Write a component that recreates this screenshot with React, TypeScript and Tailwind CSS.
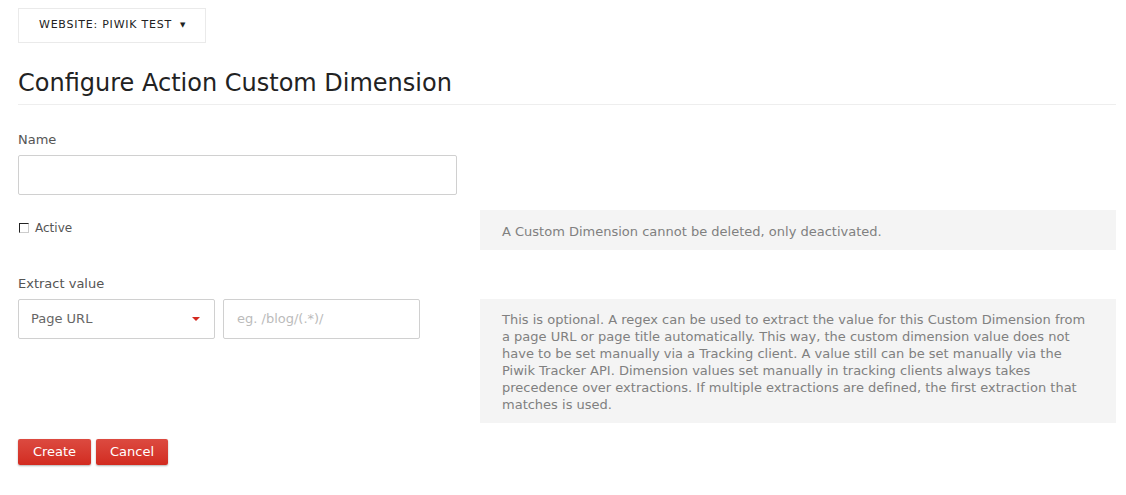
import React from 'react';

const App: React.FC = () => {
  return (
    <div className="min-h-screen bg-white pl-[18px] pr-[10px] pt-[8px] text-[#333]" style={{ fontFamily: '"DejaVu Sans", Verdana, sans-serif' }}>
      {/* Website selector */}
      <div className="flex items-center h-[35px] w-[188px] border border-[#eaeaea] pl-[20px] text-[11px] tracking-[0.07em] text-[#222]">
        WEBSITE: PIWIK TEST
        <span className="ml-[8px] text-[7px]">▼</span>
      </div>

      <h2 className="mt-[24px] pb-[5px] border-b border-[#eeeeee] text-[24px] leading-[32px] text-[#222]">
        Configure Action Custom Dimension
      </h2>

      <div className="mt-[25px] text-[13px] leading-[20px] text-[#555]">Name</div>
      <div className="mt-[5px] w-[439px] h-[40px] border border-[#d0d0d0] rounded-[2px]" />

      {/* Active row */}
      <div className="mt-[15px] flex items-start">
        <label className="w-[462px] flex items-center gap-[6px] pt-[8px] text-[12px] leading-[20px] text-[#555]">
          <span className="ml-[1px] w-[10px] h-[10px] border border-t-[#222] border-l-[#222] border-r-[#ccc] border-b-[#ccc]" />
          Active
        </label>
        <div className="flex-1 h-[40px] bg-[#f4f4f4] flex items-center px-[22px] pt-[3px] text-[13px] text-[#808080]">
          A Custom Dimension cannot be deleted, only deactivated.
        </div>
      </div>

      {/* Extract value */}
      <div className="mt-[24px] text-[13px] leading-[20px] text-[#555]">Extract value</div>
      <div className="mt-[5px] flex items-start">
        <div className="w-[462px] flex gap-[8px]">
          <div className="w-[197px] h-[40px] border border-[#d0d0d0] rounded-[2px] flex items-center justify-between pl-[12px] pr-[14px] text-[13px] text-[#666]">
            Page URL
            <span className="w-0 h-0 border-l-[4px] border-r-[4px] border-t-[4px] border-l-transparent border-r-transparent border-t-[#d4291f]" />
          </div>
          <div className="w-[197px] h-[40px] border border-[#d0d0d0] rounded-[2px] flex items-center pl-[13px] text-[13px] text-[#bbb]">
            eg. /blog/(.*)/
          </div>
        </div>
        <div className="flex-1 bg-[#f4f4f4] pl-[22px] pr-[26px] pt-[12px] pb-[10px] text-[13px] leading-[17px] text-[#808080]">
          This is optional. A regex can be used to extract the value for this Custom Dimension from a page URL or page title automatically. This way, the custom dimension value does not have to be set manually via a Tracking client. A value still can be set manually via the Piwik Tracker API. Dimension values set manually in tracking clients always takes precedence over extractions. If multiple extractions are defined, the first extraction that matches is used.
        </div>
      </div>

      {/* Buttons */}
      <div className="mt-[16px] flex gap-[5px]">
        <button className="w-[73px] h-[26px] rounded-[2px] bg-gradient-to-b from-[#dc4a40] to-[#d22a1f] text-white text-[13px] shadow-[0_1px_2px_rgba(0,0,0,0.3)]">
          Create
        </button>
        <button className="w-[72px] h-[26px] rounded-[2px] bg-gradient-to-b from-[#dc4a40] to-[#d22a1f] text-white text-[13px] shadow-[0_1px_2px_rgba(0,0,0,0.3)]">
          Cancel
        </button>
      </div>
    </div>
  );
};

export default App;
